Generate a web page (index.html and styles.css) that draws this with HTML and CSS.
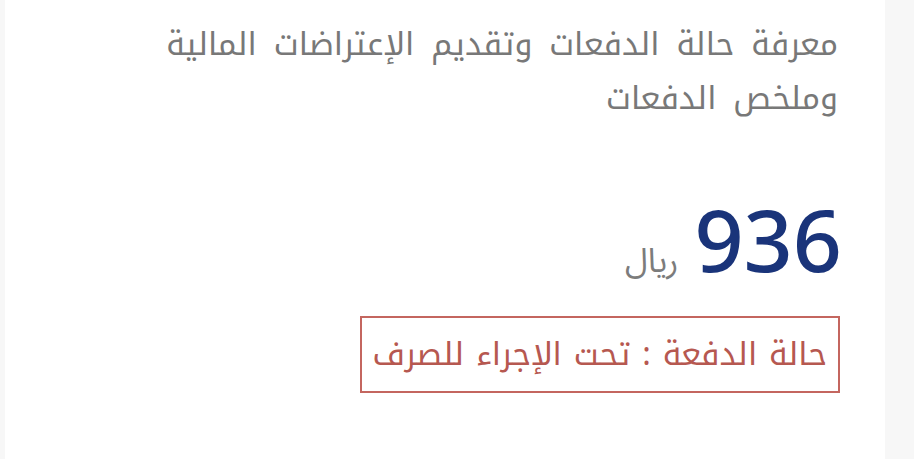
FILE: index.html
```html
<!DOCTYPE html>
<html lang="ar" dir="rtl">
<head><meta charset="utf-8"><link rel="stylesheet" href="styles.css"></head>
<body>
<main class="page">
  <section class="card">
    <h1 class="title"><span class="line">معرفة حالة الدفعات وتقديم الإعتراضات المالية</span><span class="line">وملخص الدفعات</span></h1>
    <div class="amount">
      <span class="value">936</span>
      <span class="currency">ريال</span>
    </div>
    <div class="status">حالة الدفعة : تحت الإجراء للصرف</div>
  </section>
</main>
</body></html>
```
FILE: styles.css
```css
html, body { margin: 0; padding: 0; }
body { background: #f7f7f7; width: 914px; height: 459px; overflow: hidden; }
.page { display: flex; height: 459px; }
.card {
  background: #fff;
  width: 880px;
  height: 459px;
  margin-right: 29px;
  margin-left: 5px;
  box-sizing: border-box;
  padding: 18px 47px 0 0;
  display: flex;
  flex-direction: column;
  align-items: flex-start;
}
.title {
  margin: 0;
  display: flex;
  flex-direction: column;
  align-items: flex-start;
  font-family: "Noto Kufi Arabic", "DejaVu Sans", sans-serif;
  font-weight: 400;
  font-size: 32px;
  line-height: 54px;
  word-spacing: 6px;
  color: #787878;
}
.line { display: block; height: 54px; }
.amount {
  display: flex;
  align-items: baseline;
  gap: 16px;
  margin-top: 63px;
  margin-right: -4px;
  height: 100px;
}
.value {
  font-family: "Noto Sans", "Open Sans", sans-serif;
  font-size: 86px;
  font-weight: 500;
  line-height: 100px;
  color: #1a347a;
}
.currency {
  font-family: "Noto Sans Arabic", "DejaVu Sans", sans-serif;
  font-size: 33px;
  line-height: 1;
  color: #7c7c7c;
}
.status {
  margin-top: 27px;
  margin-right: -2px;
  border: 2px solid #c4665f;
  padding: 0 11px;
  font-family: "Noto Kufi Arabic", "DejaVu Sans", sans-serif;
  font-size: 32px;
  line-height: 73px;
  word-spacing: 1px;
  color: #b65850;
}
```
